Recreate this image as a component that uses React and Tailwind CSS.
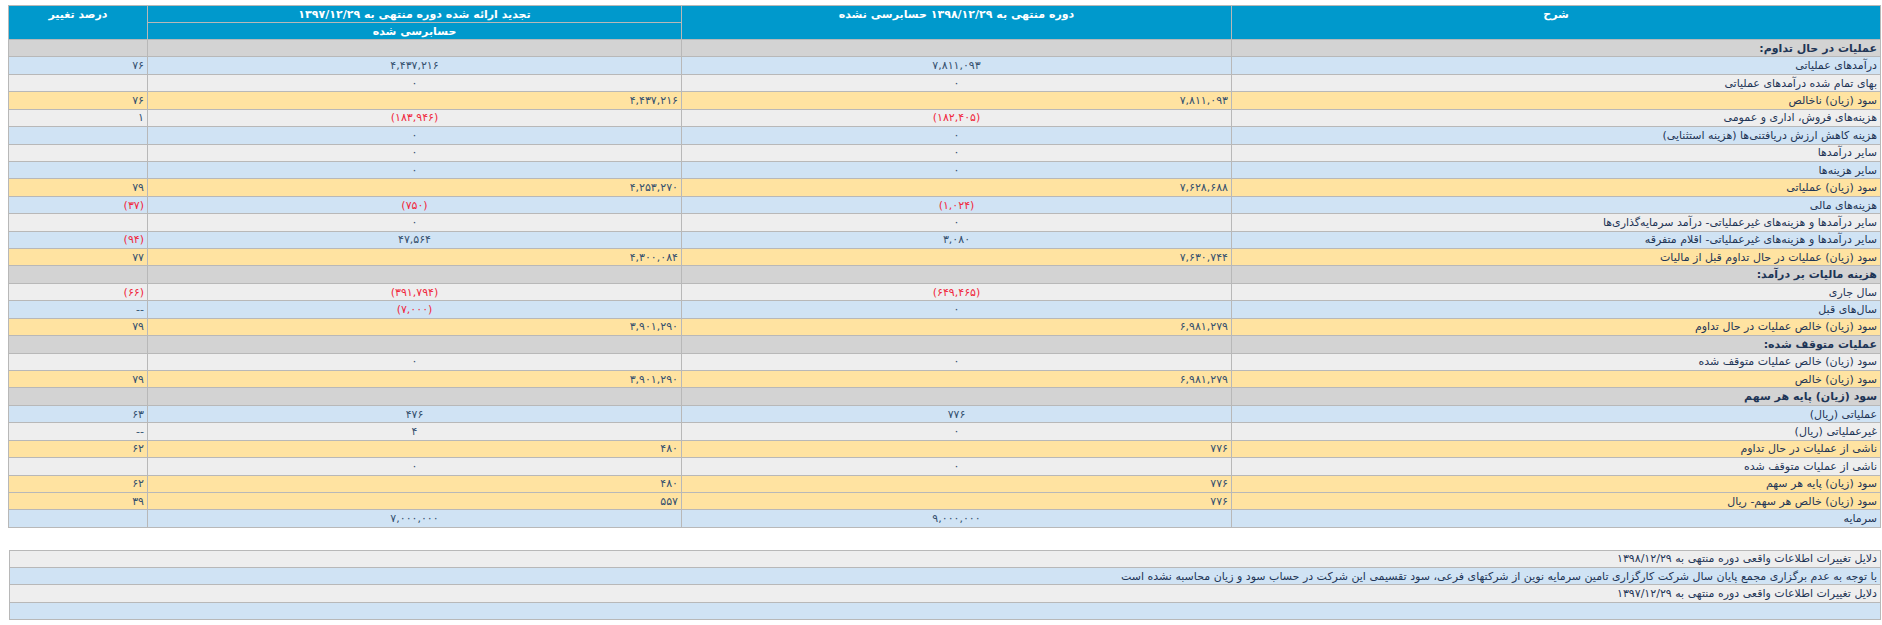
import React from 'react';

const rows = [
  { t: 'section', label: 'عملیات در حال تداوم:' },
  { t: 'blue', label: 'درآمدهای عملیاتی', pct: '۷۶', prev: '۴,۴۳۷,۲۱۶', curr: '۷,۸۱۱,۰۹۳' },
  { t: 'gray', label: 'بهای تمام شده درآمدهای عملیاتی', prev: '۰', curr: '۰' },
  { t: 'yellow', label: 'سود (زیان) ناخالص', pct: '۷۶', prev: '۴,۴۳۷,۲۱۶', curr: '۷,۸۱۱,۰۹۳' },
  { t: 'gray', label: 'هزینه‌های فروش، اداری و عمومی', pct: '۱', prev: '(۱۸۳,۹۴۶)', curr: '(۱۸۲,۴۰۵)' },
  { t: 'blue', label: 'هزینه کاهش ارزش دریافتنی‌ها (هزینه استثنایی)', prev: '۰', curr: '۰' },
  { t: 'gray', label: 'سایر درآمدها', prev: '۰', curr: '۰' },
  { t: 'blue', label: 'سایر هزینه‌ها', prev: '۰', curr: '۰' },
  { t: 'yellow', label: 'سود (زیان) عملیاتی', pct: '۷۹', prev: '۴,۲۵۳,۲۷۰', curr: '۷,۶۲۸,۶۸۸' },
  { t: 'blue', label: 'هزینه‌های مالی', pct: '(۳۷)', prev: '(۷۵۰)', curr: '(۱,۰۲۴)' },
  { t: 'gray', label: 'سایر درآمدها و هزینه‌های غیرعملیاتی- درآمد سرمایه‌گذاری‌ها', prev: '۰', curr: '۰' },
  { t: 'blue', label: 'سایر درآمدها و هزینه‌های غیرعملیاتی- اقلام متفرقه', pct: '(۹۴)', prev: '۴۷,۵۶۴', curr: '۳,۰۸۰' },
  { t: 'yellow', label: 'سود (زیان) عملیات در حال تداوم قبل از مالیات', pct: '۷۷', prev: '۴,۳۰۰,۰۸۴', curr: '۷,۶۳۰,۷۴۴' },
  { t: 'section', label: 'هزینه مالیات بر درآمد:' },
  { t: 'gray', label: 'سال جاری', pct: '(۶۶)', prev: '(۳۹۱,۷۹۴)', curr: '(۶۴۹,۴۶۵)' },
  { t: 'blue', label: 'سال‌های قبل', pct: '--', prev: '(۷,۰۰۰)', curr: '۰' },
  { t: 'yellow', label: 'سود (زیان) خالص عملیات در حال تداوم', pct: '۷۹', prev: '۳,۹۰۱,۲۹۰', curr: '۶,۹۸۱,۲۷۹' },
  { t: 'section', label: 'عملیات متوقف شده:' },
  { t: 'gray', label: 'سود (زیان) خالص عملیات متوقف شده', prev: '۰', curr: '۰' },
  { t: 'yellow', label: 'سود (زیان) خالص', pct: '۷۹', prev: '۳,۹۰۱,۲۹۰', curr: '۶,۹۸۱,۲۷۹' },
  { t: 'section', label: 'سود (زیان) پایه هر سهم' },
  { t: 'blue', label: 'عملیاتی (ریال)', pct: '۶۳', prev: '۴۷۶', curr: '۷۷۶' },
  { t: 'gray', label: 'غیرعملیاتی (ریال)', pct: '--', prev: '۴', curr: '۰' },
  { t: 'yellow', label: 'ناشی از عملیات در حال تداوم', pct: '۶۲', prev: '۴۸۰', curr: '۷۷۶' },
  { t: 'gray', label: 'ناشی از عملیات متوقف شده', prev: '۰', curr: '۰' },
  { t: 'yellow', label: 'سود (زیان) پایه هر سهم', pct: '۶۲', prev: '۴۸۰', curr: '۷۷۶' },
  { t: 'yellow', label: 'سود (زیان) خالص هر سهم- ریال', pct: '۳۹', prev: '۵۵۷', curr: '۷۷۶' },
  { t: 'blue', label: 'سرمایه', prev: '۷,۰۰۰,۰۰۰', curr: '۹,۰۰۰,۰۰۰' },
];

const notes = [
  { t: 'gray', text: 'دلایل تغییرات اطلاعات واقعی دوره منتهی به ۱۳۹۸/۱۲/۲۹' },
  { t: 'blue', text: 'با توجه به عدم برگزاری مجمع پایان سال شرکت کارگزاری تامین سرمایه نوین از شرکتهای فرعی، سود تقسیمی این شرکت در حساب سود و زیان محاسبه نشده است' },
  { t: 'gray', text: 'دلایل تغییرات اطلاعات واقعی دوره منتهی به ۱۳۹۷/۱۲/۲۹' },
  { t: 'blue', text: '' },
];

const rowBg = {
  section: 'bg-[#d3d3d3]',
  blue: 'bg-[#d0e3f4]',
  gray: 'bg-[#eeeeee]',
  yellow: 'bg-[#ffe3a1]',
};

const cell = 'border border-[#b8b8b8] px-[3px] py-0 whitespace-nowrap';

const Num = ({ v }) => {
  if (!v) return null;
  const neg = v.startsWith('(');
  return <span className={neg ? 'text-[#f0283c]' : 'text-[#34506e]'}>{v}</span>;
};

const App = () => {
  return (
    <div
      dir="rtl"
      className="bg-white pt-[5px] pl-[9px] pr-[1px] text-[11px] leading-none text-[#1e3556]"
      style={{ fontFamily: '"DejaVu Sans", Tahoma, sans-serif' }}
    >
      <table className="w-full table-fixed border-collapse">
        <colgroup>
          <col className="w-[649px]" />
          <col className="w-[550px]" />
          <col className="w-[534px]" />
          <col className="w-[139px]" />
        </colgroup>
        <thead>
          <tr className="h-[17px] bg-[#0099cc] text-white font-bold">
            <th rowSpan={2} className={`${cell} align-top pt-[3px] text-center`}>شرح</th>
            <th rowSpan={2} className={`${cell} align-top pt-[3px] text-center`}>
              دوره منتهی به ۱۳۹۸/۱۲/۲۹ حسابرسی نشده
            </th>
            <th className={`${cell} align-top pt-[3px] text-center`}>
              تجدید ارائه شده دوره منتهی به ۱۳۹۷/۱۲/۲۹
            </th>
            <th rowSpan={2} className={`${cell} align-top pt-[3px] text-center`}>درصد تغییر</th>
          </tr>
          <tr className="h-[17px] bg-[#0099cc] text-white font-bold">
            <th className={`${cell} text-center`}>حسابرسی شده</th>
          </tr>
        </thead>
        <tbody>
          {rows.map((r, i) => {
            const right = r.t === 'yellow';
            return (
              <tr key={i} className={`h-[17.43px] ${rowBg[r.t]}`}>
                <td className={`${cell} text-right ${r.t === 'section' ? 'font-bold' : ''}`}>{r.label}</td>
                <td className={`${cell} ${right ? 'text-right' : 'text-center'}`}>
                  <Num v={r.curr} />
                </td>
                <td className={`${cell} ${right ? 'text-right' : 'text-center'}`}>
                  <Num v={r.prev} />
                </td>
                <td className={`${cell} text-right`}>
                  <Num v={r.pct} />
                </td>
              </tr>
            );
          })}
        </tbody>
      </table>

      <table className="mt-[22px] w-full border-collapse">
        <tbody>
          {notes.map((n, i) => (
            <tr key={i} className={`h-[17.3px] ${rowBg[n.t]}`}>
              <td className={`${cell} text-right`}>{n.text}</td>
            </tr>
          ))}
        </tbody>
      </table>
    </div>
  );
};

export default App;
